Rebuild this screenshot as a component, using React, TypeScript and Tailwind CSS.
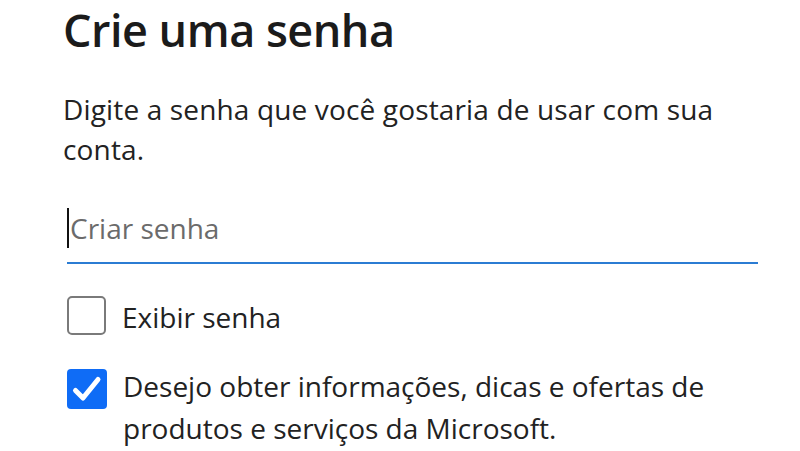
import React from "react";

export default function App() {
  return (
    <div className="w-[800px] h-[451px] bg-white overflow-hidden text-[#1b1b1b]" style={{ fontFamily: '"Open Sans", "Noto Sans", sans-serif' }}>
      <div className="pl-[63px] pr-[42px] pt-[2px]">
        <h1 className="text-[45px] leading-[56px] font-semibold text-[#1b1b1b] tracking-[-0.5px]">Crie uma senha</h1>
        <p className="mt-[31px] text-[28px] leading-[40px] text-[#222] tracking-[0.15px] w-[700px]">
          Digite a senha que você gostaria de usar com sua conta.
        </p>
        <div className="mt-[31px] ml-[4px] w-[691px]">
          <div className="flex items-center h-[56px]">
            <div className="w-[2px] h-[40px] bg-[#111] mr-[1px]"></div>
            <span className="text-[28px] text-[#6b6b6b]">Criar senha</span>
          </div>
          <div className="mt-[6px] h-[2px] bg-[#2b7cd3]"></div>
        </div>
        <div className="mt-[32px] ml-[4px] flex items-start gap-[16px]">
          <div className="w-[39px] h-[39px] shrink-0 rounded-[5px] border-2 border-[#7a7a7a] bg-white"></div>
          <span className="mt-[1px] text-[28px] leading-[40px] text-[#222]">Exibir senha</span>
        </div>
        <div className="mt-[32px] ml-[4px] flex items-start gap-[16px]">
          <div className="w-[40px] h-[40px] shrink-0 rounded-[4px] bg-[#0f6cf6]">
            <svg width="40" height="40" viewBox="0 0 40 40">
              <path d="M8.5 21.5 L16 29 L31 10.5" fill="none" stroke="white" strokeWidth="5" strokeLinecap="round" strokeLinejoin="round" />
            </svg>
          </div>
          <span className="-mt-[4px] text-[28px] leading-[42px] text-[#222] w-[640px]">
            Desejo obter informações, dicas e ofertas de produtos e serviços da Microsoft.
          </span>
        </div>
      </div>
    </div>
  );
}
